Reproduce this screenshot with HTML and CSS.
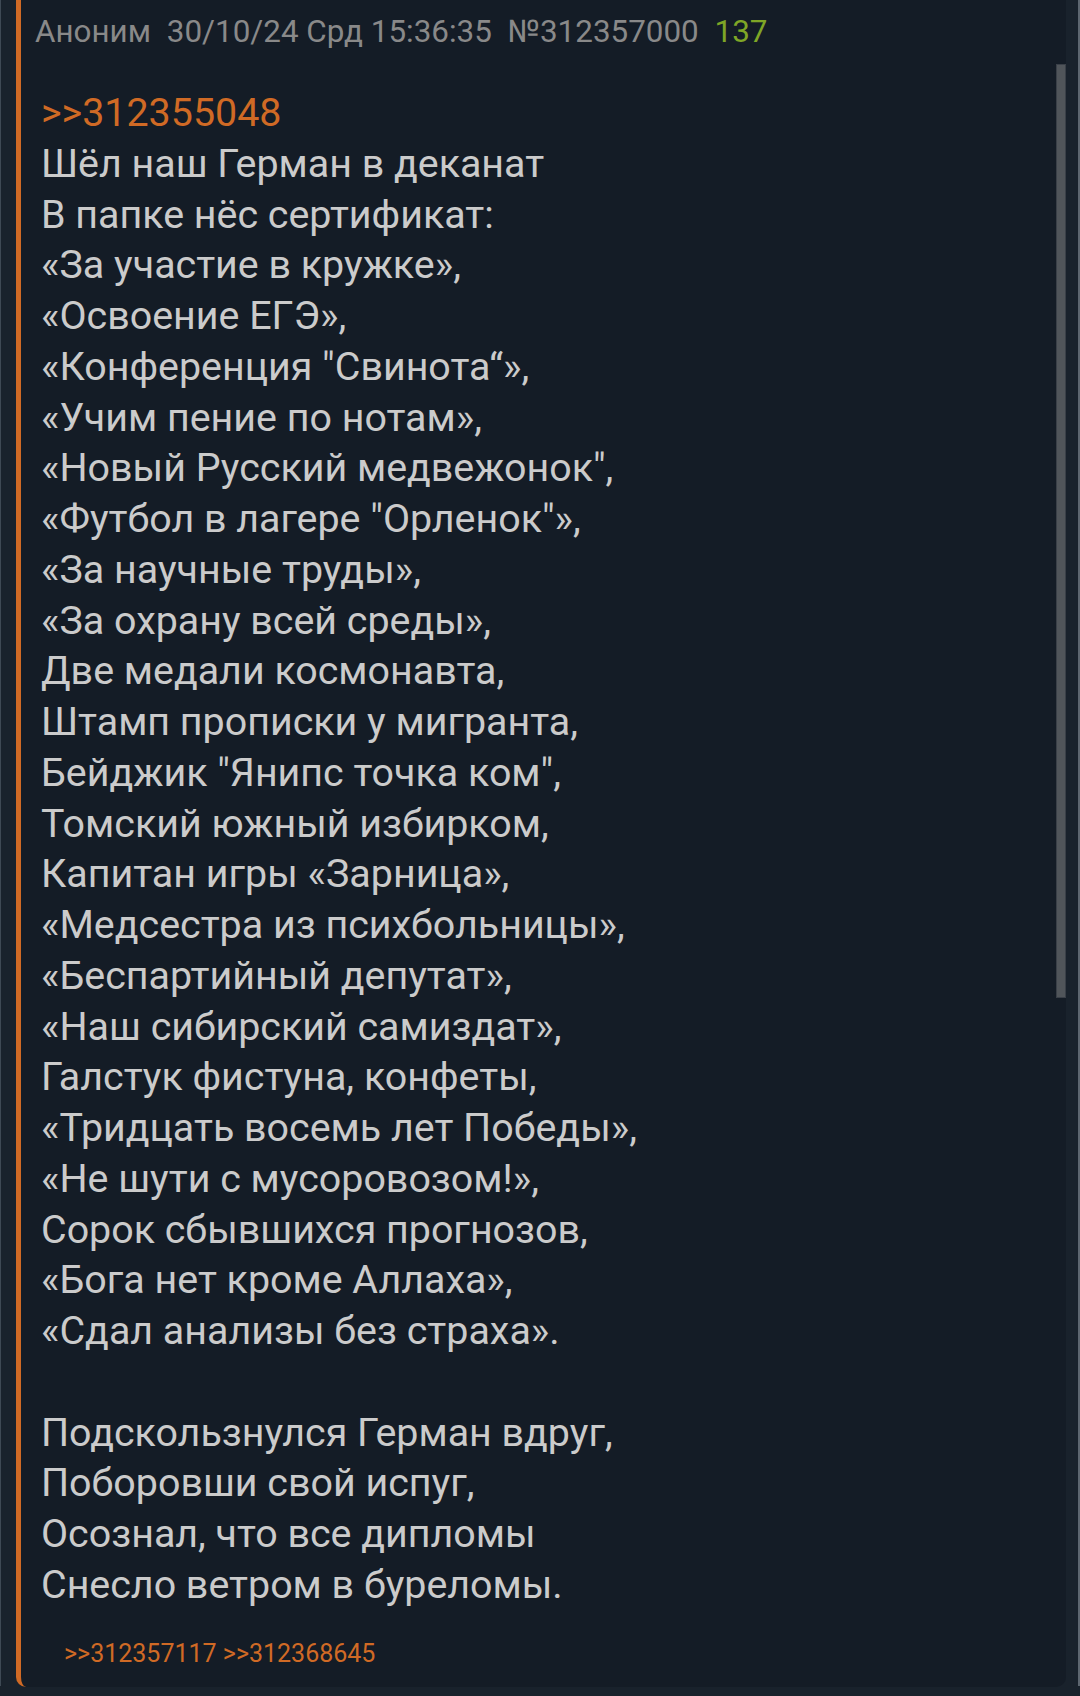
FILE: index.html
```html
<!DOCTYPE html>
<html lang="ru">
<head>
    <meta charset="UTF-8">
    <meta name="viewport" content="width=device-width, initial-scale=1.0">
    <title>Тред</title>
    <link rel="stylesheet" href="styles.css">
</head>
<body>
    <div class="thread">
        <article class="post">
            <div class="post-head">
                <span class="post-name">Аноним</span>
                <span class="post-date">30/10/24 Срд 15:36:35</span>
                <span class="post-num">№312357000</span>
                <span class="post-count">137</span>
            </div>
            <div class="post-body">
                <a href="#" class="reply-link">&gt;&gt;312355048</a><br>
                Шёл наш Герман в деканат<br>
                В папке нёс сертификат:<br>
                «За участие в кружке»,<br>
                «Освоение ЕГЭ»,<br>
                «Конференция "Свинота“»,<br>
                «Учим пение по нотам»,<br>
                «Новый Русский медвежонок",<br>
                «Футбол в лагере "Орленок"»,<br>
                «За научные труды»,<br>
                «За охрану всей среды»,<br>
                Две медали космонавта,<br>
                Штамп прописки у мигранта,<br>
                Бейджик "Янипс точка ком",<br>
                Томский южный избирком,<br>
                Капитан игры «Зарница»,<br>
                «Медсестра из психбольницы»,<br>
                «Беспартийный депутат»,<br>
                «Наш сибирский самиздат»,<br>
                Галстук фистуна, конфеты,<br>
                «Тридцать восемь лет Победы»,<br>
                «Не шути с мусоровозом!»,<br>
                Сорок сбывшихся прогнозов,<br>
                «Бога нет кроме Аллаха»,<br>
                «Сдал анализы без страха».<br>
                <br>
                Подскользнулся Герман вдруг,<br>
                Поборовши свой испуг,<br>
                Осознал, что все дипломы<br>
                Снесло ветром в буреломы.
            </div>
            <div class="post-replies">
                <a href="#" class="reply-link">&gt;&gt;312357117</a>
                <a href="#" class="reply-link">&gt;&gt;312368645</a>
            </div>
            <div class="scroll-thumb"></div>
        </article>
    </div>
</body>
</html>
```

FILE: styles.css
```css
body {
    margin: 0;
    height: 1696px;
    overflow: hidden;
    background-color: #19222c;
    font-family: Roboto, "Noto Sans", sans-serif;
}

.thread {
    border-left: 1px solid #3e4954;
    border-right: 2px solid #5d6670;
    padding: 0 12px 8px 15px;
    height: 1696px;
    box-sizing: border-box;
}

.post {
    position: relative;
    margin-top: -10px;
    background-color: #141c26;
    border-left: 5px solid #d06a25;
    border-radius: 10px;
    padding: 24px 0 18px 0;
}

.post-head {
    font-size: 31.4px;
    line-height: 36px;
    color: #898989;
    padding-left: 14px;
}

.post-head span {
    margin-right: 8px;
}

.post-count {
    color: #7fa626;
}

.post-body {
    margin-top: 38px;
    padding-left: 20px;
    font-size: 39.4px;
    line-height: 50.75px;
    color: #cbcbcb;
}

.reply-link {
    color: #d06a25;
    text-decoration: none;
}

.post-replies {
    margin-top: 28px;
    padding-left: 43px;
    font-size: 25px;
    line-height: 30px;
}

.scroll-thumb {
    position: absolute;
    top: 74px;
    right: 0;
    width: 10px;
    height: 934px;
    background-color: #50555a;
    border: 1px solid #3a4048;
    box-sizing: border-box;
}
```
